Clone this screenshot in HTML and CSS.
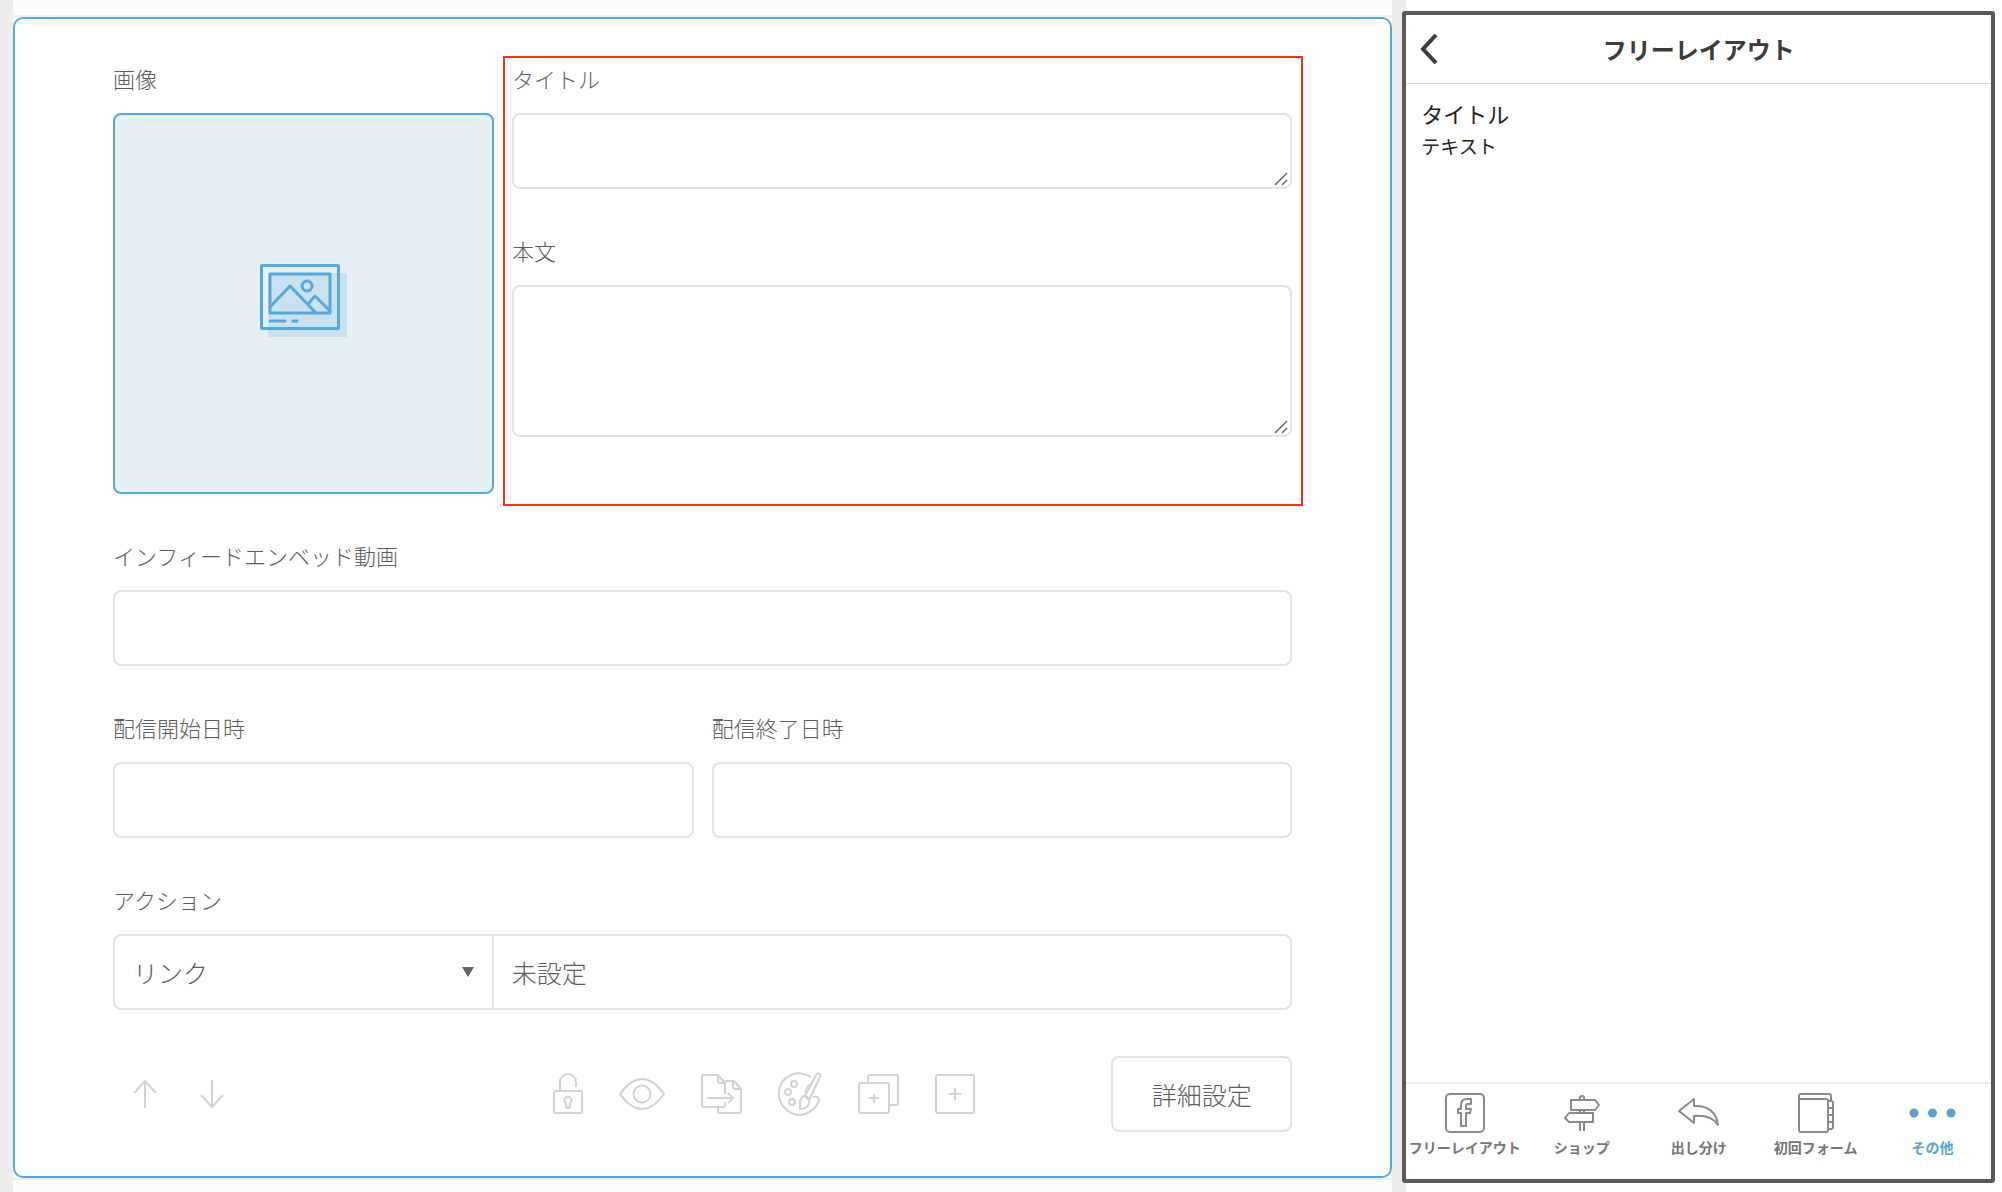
FILE: index.html
```
<!DOCTYPE html>
<html lang="ja">
<head>
    <meta charset="UTF-8">
    <meta name="viewport" content="width=device-width, initial-scale=1.0">
    <title>フリーレイアウト</title>
    <link rel="stylesheet" href="styles.css">
</head>
<body>
    <main class="editor">
        <div class="panel">
            <form class="card">
                <div class="media-row">
                    <div class="field">
                        <label for="image">画像</label>
                        <button type="button" class="image-picker" id="image">
                            <svg width="88" height="80" viewBox="0 0 88 80" fill="none" stroke="#58a7d9" stroke-width="3" stroke-linecap="round" stroke-linejoin="round">
                                <path d="M8 9h79v64H8z" fill="#cae1f0" stroke="none"/>
                                <rect x="1.500" y="1.500" width="77" height="63" rx="1"/>
                                <rect x="10" y="10" width="60" height="39"/>
                                <path d="M10 43L30 22l26 27M48 40l7-8 15 15"/>
                                <circle cx="47" cy="22" r="5"/>
                                <path d="M10 57h15M33 57h4"/>
                            </svg>
                        </button>
                    </div>
                    <div class="text-column">
                        <div class="field">
                            <label for="title">タイトル</label>
                            <div class="textarea-wrap">
                                <textarea id="title" class="input"></textarea>
                                <svg class="grip" width="14" height="14" viewBox="0 0 14 14" stroke="#6b6b6b" stroke-width="1.500"><path d="M1 13L13 1M8 13l5-5"/></svg>
                            </div>
                        </div>
                        <div class="field">
                            <label for="text">本文</label>
                            <div class="textarea-wrap">
                                <textarea id="text" class="input input-tall"></textarea>
                                <svg class="grip" width="14" height="14" viewBox="0 0 14 14" stroke="#6b6b6b" stroke-width="1.500"><path d="M1 13L13 1M8 13l5-5"/></svg>
                            </div>
                        </div>
                    </div>
                </div>

                <div class="field">
                    <label for="video">インフィードエンベッド動画</label>
                    <input type="text" class="input" id="video">
                </div>

                <div class="date-row">
                    <div class="field">
                        <label for="start">配信開始日時</label>
                        <input type="text" class="input" id="start">
                    </div>
                    <div class="field">
                        <label for="end">配信終了日時</label>
                        <input type="text" class="input" id="end">
                    </div>
                </div>

                <div class="field">
                    <label for="action">アクション</label>
                    <div class="action">
                        <div class="select-wrap">
                            <select id="action">
                                <option>リンク</option>
                            </select>
                            <svg class="caret" width="12" height="10" viewBox="0 0 12 10"><path d="M0 0h12L6 10z" fill="#666"/></svg>
                        </div>
                        <input type="text" class="action-value" value="未設定" aria-label="リンク先">
                    </div>
                </div>

                <div class="toolbar">
                    <div class="move">
                        <button type="button" class="tool" aria-label="上へ">
                            <svg width="24" height="28" viewBox="0 0 24 28"><path d="M12 28V1M1 13L12 1l11 12"/></svg>
                        </button>
                        <button type="button" class="tool" aria-label="下へ">
                            <svg width="24" height="28" viewBox="0 0 24 28"><path d="M12 0v27M1 15l11 12 11-12"/></svg>
                        </button>
                    </div>
                    <div class="tools">
                        <button type="button" class="tool" aria-label="ロック">
                            <svg width="30" height="42" viewBox="0 0 30 42"><rect x="1" y="18" width="28" height="22" rx="2"/><path d="M7 18V9a8 8 0 0 1 16 0v5"/><path d="M13 30a3.500 3.500 0 1 1 4 0v4q-2 2-4 0z"/></svg>
                        </button>
                        <button type="button" class="tool" aria-label="表示">
                            <svg width="46" height="32" viewBox="0 0 46 32"><path d="M1 16C6 9 13 1 23 1s17 8 22 15c-5 7-12 15-22 15S6 23 1 16z"/><circle cx="23" cy="16" r="8.500"/></svg>
                        </button>
                        <button type="button" class="tool" aria-label="移動">
                            <svg width="41" height="40" viewBox="0 0 41 40"><path d="M24 20V9l-7-8H3Q1 1 1 3v28q0 2 2 2h19q2 0 2-2v-3M17 1v6q0 2 2 2h5"/><path d="M24 7h9l7 8v22q0 2-2 2H19q-2 0-2-2v-4M32 7v6q0 2 2 2h6"/><path d="M6 24h26M27 19l5 5-5 5"/></svg>
                        </button>
                        <button type="button" class="tool" aria-label="デザイン">
                            <svg width="44" height="44" viewBox="0 0 44 44"><path d="M33 5C27 1 19 0 13 3 4 7 0 15 1 25c2 10 11 18 21 18 9-1 17-7 19-15 0-3-3-4-6-3"/><circle cx="16" cy="12" r="3"/><circle cx="10" cy="20" r="3"/><circle cx="14" cy="30" r="3"/><path d="M38 3c2-3 6-1 4 2L31 28l-4-4z"/><path d="M33 12c-5 3-6 7-5 11M26 24c4 0 6 4 5 7-1 4-5 6-9 6 1-5-2-10 4-13z"/></svg>
                        </button>
                        <button type="button" class="tool" aria-label="複製">
                            <svg width="41" height="40" viewBox="0 0 41 40"><rect x="1" y="9" width="30" height="30" rx="2"/><path d="M10 9V3q0-2 2-2h26q2 0 2 2v26q0 2-2 2h-7M16 20v9M11 24h10"/></svg>
                        </button>
                        <button type="button" class="tool" aria-label="追加">
                            <svg width="40" height="40" viewBox="0 0 40 40"><rect x="1" y="1" width="38" height="38" rx="2"/><path d="M20 14v12M14 20h12"/></svg>
                        </button>
                    </div>
                    <button type="button" class="detail-button">詳細設定</button>
                </div>
            </form>
        </div>
    </main>

    <aside class="phone">
        <header class="phone-header">
            <button type="button" class="back" aria-label="戻る">
                <svg width="18" height="30" viewBox="0 0 18 30" fill="none" stroke="#3c3c3c" stroke-width="4"><path d="M16 1L3 15l13 14"/></svg>
            </button>
            <h1>フリーレイアウト</h1>
        </header>
        <div class="phone-body">
            <h2>タイトル</h2>
            <p>テキスト</p>
        </div>
        <nav class="tabs">
            <a href="#" class="tab">
                <svg width="40" height="40" viewBox="0 0 40 40"><rect x="1" y="1" width="38" height="38" rx="4"/><path d="M16 33V20h-3v-4h3v-4q0-6 6-6h4v5h-3q-2 0-2 2v3h5l-1 4h-4v13z"/></svg>
                フリーレイアウト
            </a>
            <a href="#" class="tab">
                <svg width="38" height="40" viewBox="0 0 38 40"><path d="M8 7h24l4 5-4 5H8zM30 20H6l-4 5 4 4h24zM17 7V4q2-2 4 0v3M17 17v3M21 17v3M17 29v9M21 29v9"/></svg>
                ショップ
            </a>
            <a href="#" class="tab">
                <svg width="42" height="40" viewBox="0 0 42 40"><path d="M1 18L16 6v7c14-1 23 7 24 19-5-8-13-10-24-9v7z"/></svg>
                出し分け
            </a>
            <a href="#" class="tab">
                <svg width="36" height="40" viewBox="0 0 36 40"><path d="M1 6V3q0-2 2-2h28q2 0 2 2v5M1 6h27q2 0 2 2v29q0 2-2 2H3q-2 0-2-2zM30 8h3q2 0 2 2v24q0 2-2 2h-3M30 15h5M30 22h5M30 29h5"/></svg>
                初回フォーム
            </a>
            <a href="#" class="tab tab-active">
                <svg width="47" height="40" viewBox="0 0 47 40"><circle cx="5" cy="20" r="4.500"/><circle cx="23.500" cy="20" r="4.500"/><circle cx="42" cy="20" r="4.500"/></svg>
                その他
            </a>
        </nav>
    </aside>
</body>
</html>
```
FILE: styles.css
```
* {
    box-sizing: border-box;
}
body {
    margin: 0;
    min-height: 100vh;
    display: flex;
    background-color: #fff;
    color: #5c5c5c;
    font-family: "Noto Sans CJK JP", sans-serif;
    font-weight: 300;
}
button,
input,
select,
textarea {
    font: inherit;
    color: inherit;
}
button {
    padding: 0;
    border: none;
    background: none;
    cursor: pointer;
}
svg {
    display: block;
}

/* editor */
.editor {
    flex: 1406;
    padding-top: 15px;
    border: solid #ededed;
    border-width: 0 14px 0 13px;
    background-color: #fcfcfc;
}
.panel {
    border-top: 2px solid #efefed;
    border-bottom: 2px solid #efefef;
    background-color: #fff;
}
.card {
    display: flex;
    flex-direction: column;
    gap: 46px;
    padding: 44px 98px;
    border: 2px solid #58a7d9;
    border-radius: 10px;
}
.field {
    display: flex;
    flex-direction: column;
    gap: 20px;
}
.field label {
    font-size: 22px;
    line-height: 30px;
}
.media-row {
    display: grid;
    grid-template-columns: 381fr 780fr;
    gap: 18px;
}
.date-row {
    display: grid;
    grid-template-columns: 1fr 1fr;
    gap: 18px;
}
.image-picker {
    display: flex;
    align-items: center;
    justify-content: center;
    width: 100%;
    aspect-ratio: 1;
    border: 2px solid #58a7d9;
    border-radius: 8px;
    background-color: #e5f0f7;
}
.text-column {
    position: relative;
    display: flex;
    flex-direction: column;
    gap: 46px;
}
/* red frame around the text fields */
.text-column::after {
    content: "";
    position: absolute;
    inset: -7px -11px -12px -9px;
    border: 2px solid #ee3124;
    pointer-events: none;
}
.input {
    display: block;
    width: 100%;
    height: 76px;
    padding: 0 18px;
    border: 2px solid #e0e3ea;
    border-radius: 8px;
    background-color: #fff;
    font-size: 25px;
    resize: none;
}
.input-tall {
    height: 152px;
}
.textarea-wrap {
    position: relative;
}
.grip {
    position: absolute;
    right: 4px;
    bottom: 3px;
}
.action {
    display: grid;
    grid-template-columns: 380fr 799fr;
    height: 76px;
    border: 2px solid #e0e3ea;
    border-radius: 8px;
    font-size: 25px;
}
.select-wrap {
    position: relative;
    border-right: 2px solid #e0e3ea;
}
.select-wrap select {
    width: 100%;
    height: 100%;
    padding: 0 18px;
    border: none;
    background: none;
    appearance: none;
}
.caret {
    position: absolute;
    top: 31px;
    right: 18px;
    pointer-events: none;
}
.action-value {
    min-width: 0;
    padding: 0 18px;
    border: none;
    background: none;
}
.toolbar {
    display: flex;
    align-items: center;
}
.move {
    display: flex;
    gap: 43px;
    padding-left: 20px;
}
.tools {
    display: flex;
    align-items: center;
    gap: 36px;
    margin: 0 136px 0 auto;
}
.tool svg {
    fill: none;
    stroke: #d2d2d2;
    stroke-width: 2;
    stroke-linejoin: round;
}
.detail-button {
    width: 181px;
    height: 76px;
    border: 2px solid #e0e3ea;
    border-radius: 8px;
    font-size: 25px;
}

/* phone preview */
.phone {
    flex: 596;
    display: flex;
    flex-direction: column;
    margin: 11px 7px 9px -4px;
    border: 4px solid #595959;
    border-radius: 3px;
    background-color: #fff;
}
.phone-header {
    display: grid;
    grid-template-columns: 48px 1fr 48px;
    align-items: center;
    height: 69px;
    border-bottom: 1px solid #d8d8d8;
}
.back {
    padding-left: 14px;
}
.phone-header h1 {
    margin: 0;
    color: #3c3c3c;
    font-size: 24px;
    font-weight: 700;
    line-height: 36px;
    text-align: center;
}
.phone-body {
    flex: 1;
    padding: 12px 15px;
    color: #222;
    font-weight: 400;
}
.phone-body h2 {
    margin: 0;
    font-size: 22px;
    font-weight: 400;
    line-height: 34px;
}
.phone-body p {
    margin: 0;
    font-size: 19px;
    line-height: 32px;
}
.tabs {
    display: grid;
    grid-template-columns: repeat(5, 1fr);
    height: 97px;
    padding-top: 9px;
    border-top: 2px solid #ededed;
}
.tab {
    display: flex;
    flex-direction: column;
    align-items: center;
    gap: 4px;
    color: #757575;
    font-size: 14px;
    font-weight: 700;
    line-height: 20px;
    text-decoration: none;
    white-space: nowrap;
}
.tab svg {
    fill: none;
    stroke: #8a8a8a;
    stroke-width: 2;
    stroke-linejoin: round;
}
.tab-active {
    color: #5ba3cc;
}
.tab-active svg {
    fill: #5ba3cc;
    stroke: none;
}
```
